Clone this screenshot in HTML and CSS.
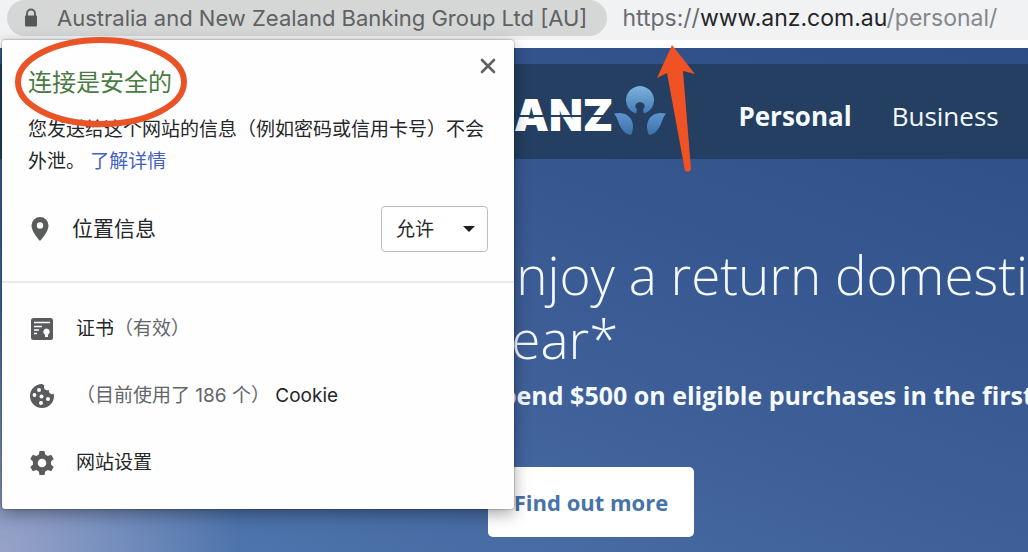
FILE: index.html
```
<!DOCTYPE html>
<html lang="zh-CN">
<head>
    <meta charset="UTF-8">
    <meta name="viewport" content="width=device-width, initial-scale=1.0">
    <title>ANZ Personal</title>
    <link rel="stylesheet" href="styles.css">
</head>
<body>
    <div class="address-bar">
        <button class="site-chip" type="button">
            <svg width="16" height="20" viewBox="0 0 16 20">
                <path d="M4 8V5.500a4 4 0 0 1 8 0V8" fill="none" stroke="#5f6163" stroke-width="2"/>
                <rect x="2" y="7.500" width="12" height="11" rx="1" fill="#55575a"/>
            </svg>
            <span>Australia and New Zealand Banking Group Ltd [AU]</span>
        </button>
        <a class="url" href="#"><span class="scheme">https://</span><span class="host">www.anz.com.au</span>/personal/</a>
    </div>

    <div class="page">
        <header class="site-header">
            <a class="logo" href="#" aria-label="ANZ">
                <span class="logo-text">ANZ</span>
                <svg width="54" height="52" viewBox="0 0 54 52">
                    <defs>
                        <linearGradient id="petal" x1="0" y1="0" x2="0" y2="1">
                            <stop offset="0" stop-color="#7db4dc"/>
                            <stop offset="1" stop-color="#427ab5"/>
                        </linearGradient>
                        <linearGradient id="leaf" x1="0" y1="0" x2="0" y2="1">
                            <stop offset="0" stop-color="#5e96cc"/>
                            <stop offset="1" stop-color="#3d70ad"/>
                        </linearGradient>
                    </defs>
                    <path d="M23 27.500A14 14 0 1 1 31 27.500L30 24Q33 20 30.500 17.500A4.600 4.600 0 0 0 23.500 17.500Q21 20 24 24Z" fill="url(#petal)"/>
                    <path d="M1 27.500Q13 25 18 33Q22 40 18 49Q10 48 6 38Q4 31 1 27.500Z" fill="url(#leaf)"/>
                    <path d="M53 27.500Q41 25 36 33Q32 40 36 49Q44 48 48 38Q50 31 53 27.500Z" fill="url(#leaf)"/>
                </svg>
            </a>
            <nav class="site-nav">
                <a class="active" href="#">Personal</a>
                <a href="#">Business</a>
            </nav>
        </header>

        <main class="hero">
            <h1>Enjoy a return domesti<br>year*</h1>
            <p>Spend $500 on eligible purchases in the first</p>
            <button class="find-more" type="button">Find out more</button>
        </main>
    </div>

    <section class="popup">
        <div class="popup-top">
            <div class="popup-head">
                <h2>连接是安全的</h2>
                <button class="close" type="button" aria-label="关闭">
                    <svg width="16" height="16" viewBox="0 0 16 16">
                        <path d="M2 2L14 14M14 2L2 14" stroke="#5f6163" stroke-width="2.600" stroke-linecap="round"/>
                    </svg>
                </button>
            </div>
            <p class="info">您发送给这个网站的信息（例如密码或信用卡号）不会外泄。 <a href="#">了解详情</a></p>
            <div class="permission">
                <svg width="24" height="26" viewBox="0 0 24 26">
                    <path fill-rule="evenodd" d="M12 1A8.500 8.500 0 0 0 3.500 9.500C3.500 16 12 25 12 25S20.500 16 20.500 9.500A8.500 8.500 0 0 0 12 1ZM12 6.300A3.200 3.200 0 1 1 12 12.700A3.200 3.200 0 1 1 12 6.300Z" fill="#5a5b5d"/>
                </svg>
                <label for="location">位置信息</label>
                <div class="select-box">
                    <select id="location">
                        <option>允许</option>
                        <option>禁止</option>
                    </select>
                </div>
            </div>
        </div>

        <ul class="menu">
            <li>
                <svg width="24" height="24" viewBox="0 0 24 24">
                    <rect x="1" y="1" width="22" height="22" rx="2.500" fill="#5a5b5d"/>
                    <path d="M4 5.500H20M4 9.500H12M4 13H9M4 16.500H7" stroke="#fff" stroke-width="1.500"/>
                    <path d="M16.500 11.500a3.300 3.300 0 0 1 1.500 6.200V20h-3v-2.300a3.300 3.300 0 0 1 1.500-6.200Z" fill="#fff"/>
                </svg>
                <button type="button">证书<span>（有效）</span></button>
            </li>
            <li>
                <svg width="24" height="24" viewBox="0 0 24 24">
                    <path d="M12 0A12 12 0 1 0 24 12L23.500 9.500Q21.500 11 19.500 9Q18.500 7.500 19 6Q16 7 14.500 5Q13.500 3.500 14.300 1.500Q13 0 12 0Z" fill="#5a5b5d"/>
                    <g fill="#fff">
                        <circle cx="9" cy="6" r="2"/>
                        <circle cx="4.500" cy="11" r="1.900"/>
                        <circle cx="11.500" cy="12.500" r="2"/>
                        <circle cx="18" cy="15" r="2"/>
                        <circle cx="11" cy="19" r="2"/>
                    </g>
                </svg>
                <button type="button"><span>（目前使用了 186 个）</span> Cookie</button>
            </li>
            <li>
                <svg width="24" height="24" viewBox="0 0 24 24">
                    <path fill-rule="evenodd" d="M9.500 0H14.500L15.200 3.400L17.800 4.900L21.200 3.800L23.700 8L21 10.500V13.500L23.700 16L21.200 20.200L17.800 19.100L15.200 20.600L14.500 24H9.500L8.800 20.600L6.200 19.100L2.800 20.200L.3 16L3 13.500V10.500L.3 8L2.800 3.800L6.200 4.900L8.800 3.400ZM12 7.700A4.300 4.300 0 1 0 12 16.300A4.300 4.300 0 1 0 12 7.700Z" fill="#5a5b5d"/>
                </svg>
                <button type="button">网站设置</button>
            </li>
        </ul>
    </section>

    <svg class="mark circle-mark" width="180" height="96" viewBox="0 0 180 96">
        <ellipse cx="90" cy="46" rx="83" ry="42" fill="none" stroke="#ea5326" stroke-width="6"/>
    </svg>
    <svg class="mark arrow-mark" width="40" height="128" viewBox="0 0 40 128">
        <path d="M16 0L39 29L27 26L35 124Q34 128 29 126L11 28L1 33Z" fill="#f15223"/>
    </svg>
</body>
</html>
```
FILE: styles.css
```
* {
    box-sizing: border-box;
}
body {
    margin: 0;
    min-height: 100vh;
    display: flex;
    flex-direction: column;
    position: relative;
    font-family: "Open Sans", "Noto Sans CJK SC", sans-serif;
}
a {
    color: inherit;
    text-decoration: none;
}
button, select {
    font: inherit;
    color: inherit;
    border: 0;
    background: none;
    padding: 0;
    cursor: pointer;
}
svg {
    display: block;
    flex: none;
}

.address-bar {
    display: flex;
    align-items: flex-start;
    gap: 15px;
    height: 48px;
    padding-left: 7px;
    border-bottom: 8px solid #fff;
    background: #f1f2f4;
    font-family: Inter, sans-serif;
    font-size: 22px;
    white-space: nowrap;
    overflow: hidden;
}
.site-chip {
    display: flex;
    align-items: center;
    gap: 18px;
    height: 36px;
    padding: 0 20px 0 16px;
    border-radius: 18px;
    background: #d5d7d6;
    color: #5f6163;
}
.url {
    font-size: 23px;
    line-height: 36px;
    color: #85878a;
}
.scheme { color: #6a6c6f; }
.host { color: #242528; }

.page {
    flex: 1;
    padding-top: 16px;
    background:
        radial-gradient(circle at 0 100%, #98a3c8 0, rgba(152, 163, 200, 0) 240px),
        linear-gradient(200deg, #2d4d86 0%, #36578f 35%, #40619a 62%, #527bb3 100%);
    color: #f4faff;
    white-space: nowrap;
    overflow: hidden;
}
.site-header {
    display: flex;
    align-items: center;
    gap: 71px;
    height: 95px;
    padding-left: 514px;
    background: #243f61;
}
.logo {
    display: flex;
    align-items: center;
}
.logo-text {
    font-family: Inter, sans-serif;
    font-size: 44px;
    font-weight: 900;
    line-height: 52px;
    color: #fff;
    position: relative;
    padding-top: 6px;
}
.logo-text::after {
    content: "";
    position: absolute;
    left: 0;
    right: 0;
    top: 32px;
    height: 2px;
    background: #243f61;
}
.site-nav {
    display: flex;
    gap: 40px;
    font-size: 26px;
    padding-top: 8px;
}
.site-nav .active { font-weight: 700; }

.hero {
    padding: 84px 0 14px 487px;
}
.hero h1 {
    margin: 0;
    font-size: 53px;
    font-weight: 300;
    line-height: 64px;
}
.hero p {
    margin: 6px 0 0;
    font-size: 25px;
    font-weight: 700;
    line-height: 36px;
}
.find-more {
    display: block;
    width: 206px;
    height: 70px;
    margin: 54px 0 0 1px;
    border-radius: 5px;
    background: #fff;
    color: #4673a8;
    font-size: 22px;
    font-weight: 700;
}

.popup {
    position: absolute;
    top: 40px;
    left: 2px;
    width: 512px;
    border-radius: 3px;
    background: #fefefe;
    box-shadow: 0 0 2px rgba(0, 0, 0, 0.5), 0 5px 16px rgba(0, 0, 0, 0.35);
    color: #252629;
    font-family: Inter, "Noto Sans CJK SC", sans-serif;
    font-size: 19px;
}
.popup-top {
    padding: 16px 26px 29px;
    border-bottom: 2px solid #e9e9ea;
}
.popup-head {
    display: flex;
    justify-content: space-between;
    align-items: flex-start;
}
.popup-head h2 {
    margin: 9px 0 0;
    font-size: 24px;
    font-weight: 400;
    line-height: 36px;
    color: #4a7b43;
}
.close {
    padding: 2px 0;
    margin-right: -8px;
}
.info {
    margin: 13px 0 0;
    line-height: 32px;
}
.info a { color: #4261c2; }
.permission {
    display: flex;
    align-items: center;
    margin-top: 28px;
}
.permission label {
    flex: 1;
    margin-left: 20px;
    font-size: 21px;
    line-height: 28px;
}
.select-box {
    position: relative;
}
.select-box select {
    appearance: none;
    width: 107px;
    height: 46px;
    padding: 0 14px;
    border: 1px solid #bcbdbf;
    border-radius: 4px;
    background: #fff;
}
.select-box::after {
    content: "";
    position: absolute;
    right: 13px;
    top: 20px;
    border: 6px solid transparent;
    border-top-color: #1d1e20;
    border-bottom: 0;
    pointer-events: none;
}
.menu {
    display: flex;
    flex-direction: column;
    gap: 39px;
    margin: 0;
    padding: 32px 28px;
    list-style: none;
}
.menu li {
    display: flex;
    align-items: center;
    gap: 22px;
}
.menu button { line-height: 28px; }
.menu span { color: #636569; }

.mark {
    position: absolute;
    pointer-events: none;
}
.circle-mark {
    top: 36px;
    left: 11px;
}
.arrow-mark {
    top: 45px;
    left: 656px;
}
```
